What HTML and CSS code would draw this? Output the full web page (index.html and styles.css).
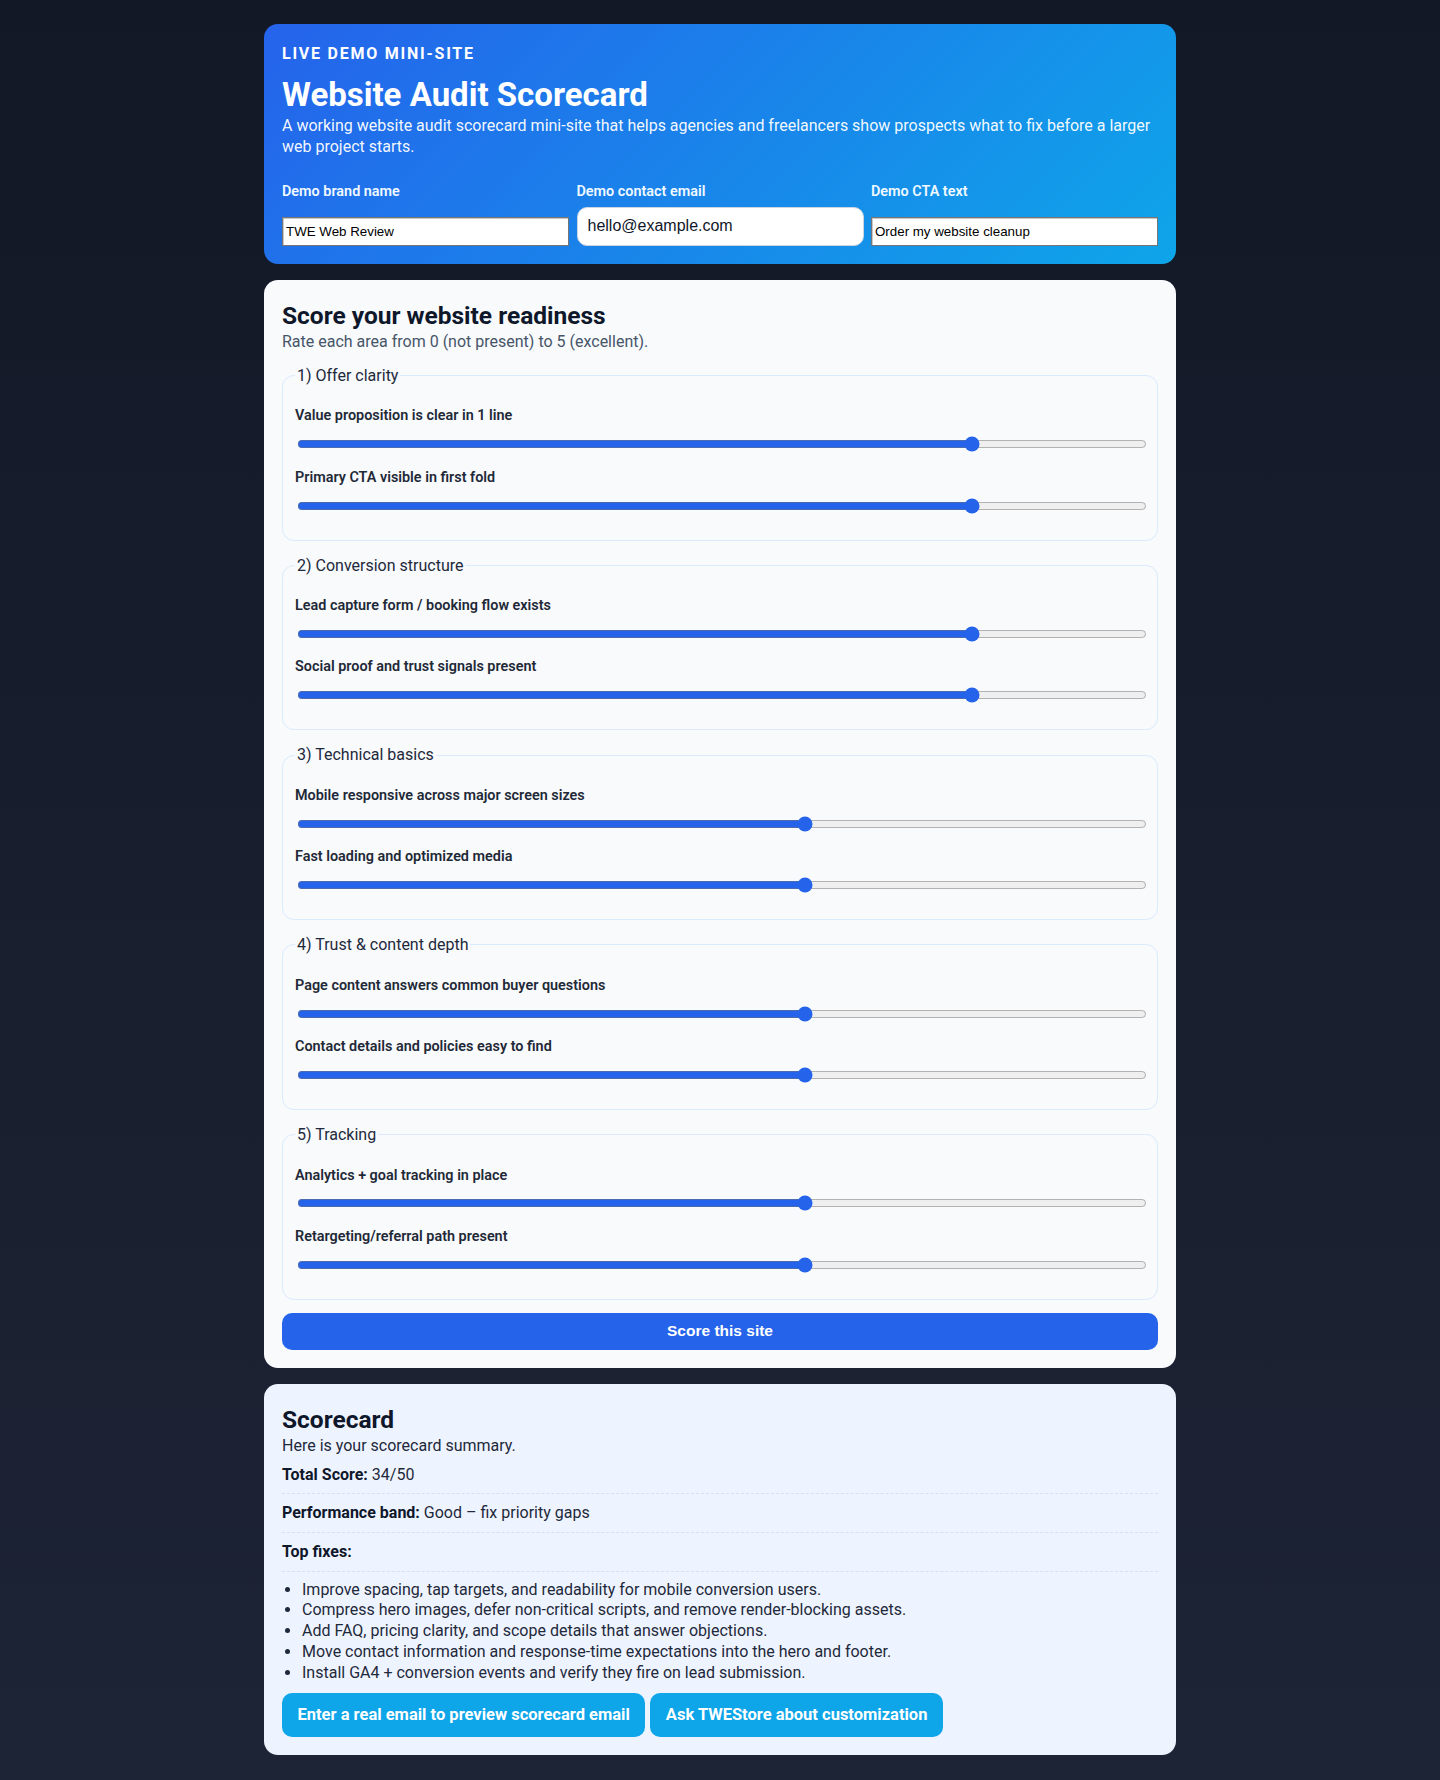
FILE: index.html
```html
<!DOCTYPE html>
<html lang="en">
<head>
<meta charset="utf-8">
<title>Website Audit Scorecard</title>
<link rel="stylesheet" href="styles.css">
</head>
<body>
<main class="page">
  <section class="hero">
    <p class="eyebrow">LIVE DEMO MINI-SITE</p>
    <h1 class="hero-title">Website Audit Scorecard</h1>
    <p class="hero-sub">A working website audit scorecard mini-site that helps agencies and freelancers show prospects what to fix before a larger web project starts.</p>
    <div class="brand-grid">
      <label class="brand-field">
        <span class="brand-label">Demo brand name</span>
        <input class="plain-input" type="text" value="TWE Web Review">
      </label>
      <label class="brand-field">
        <span class="brand-label">Demo contact email</span>
        <input class="email-input" type="email" value="hello@example.com">
      </label>
      <label class="brand-field">
        <span class="brand-label">Demo CTA text</span>
        <input class="plain-input" type="text" value="Order my website cleanup">
      </label>
    </div>
  </section>

  <section class="card card-form">
    <h2 class="card-title">Score your website readiness</h2>
    <p class="card-sub">Rate each area from 0 (not present) to 5 (excellent).</p>

    <fieldset class="group">
      <legend class="group-legend">1) Offer clarity</legend>
      <div class="group-rows">
        <div class="row"><label class="row-label">Value proposition is clear in 1 line</label><input class="range" type="range" min="0" max="5" step="1" value="4"></div>
        <div class="row"><label class="row-label">Primary CTA visible in first fold</label><input class="range" type="range" min="0" max="5" step="1" value="4"></div>
      </div>
    </fieldset>

    <fieldset class="group">
      <legend class="group-legend">2) Conversion structure</legend>
      <div class="group-rows">
        <div class="row"><label class="row-label">Lead capture form / booking flow exists</label><input class="range" type="range" min="0" max="5" step="1" value="4"></div>
        <div class="row"><label class="row-label">Social proof and trust signals present</label><input class="range" type="range" min="0" max="5" step="1" value="4"></div>
      </div>
    </fieldset>

    <fieldset class="group">
      <legend class="group-legend">3) Technical basics</legend>
      <div class="group-rows">
        <div class="row"><label class="row-label">Mobile responsive across major screen sizes</label><input class="range" type="range" min="0" max="5" step="1" value="3"></div>
        <div class="row"><label class="row-label">Fast loading and optimized media</label><input class="range" type="range" min="0" max="5" step="1" value="3"></div>
      </div>
    </fieldset>

    <fieldset class="group">
      <legend class="group-legend">4) Trust &amp; content depth</legend>
      <div class="group-rows">
        <div class="row"><label class="row-label">Page content answers common buyer questions</label><input class="range" type="range" min="0" max="5" step="1" value="3"></div>
        <div class="row"><label class="row-label">Contact details and policies easy to find</label><input class="range" type="range" min="0" max="5" step="1" value="3"></div>
      </div>
    </fieldset>

    <fieldset class="group">
      <legend class="group-legend">5) Tracking</legend>
      <div class="group-rows">
        <div class="row"><label class="row-label">Analytics + goal tracking in place</label><input class="range" type="range" min="0" max="5" step="1" value="3"></div>
        <div class="row"><label class="row-label">Retargeting/referral path present</label><input class="range" type="range" min="0" max="5" step="1" value="3"></div>
      </div>
    </fieldset>

    <button class="score-btn" type="button">Score this site</button>
  </section>

  <section class="card card-result">
    <h2 class="card-title">Scorecard</h2>
    <p class="card-sub dark">Here is your scorecard summary.</p>
    <div class="stat"><strong>Total Score:</strong> 34/50</div>
    <div class="stat"><strong>Performance band:</strong> Good – fix priority gaps</div>
    <div class="stat"><strong>Top fixes:</strong></div>
    <ul class="fixes">
      <li>Improve spacing, tap targets, and readability for mobile conversion users.</li>
      <li>Compress hero images, defer non-critical scripts, and remove render-blocking assets.</li>
      <li>Add FAQ, pricing clarity, and scope details that answer objections.</li>
      <li>Move contact information and response-time expectations into the hero and footer.</li>
      <li>Install GA4 + conversion events and verify they fire on lead submission.</li>
    </ul>
    <div class="actions">
      <a class="action-btn" href="#">Enter a real email to preview scorecard email</a>
      <a class="action-btn" href="#">Ask TWEStore about customization</a>
    </div>
  </section>
</main>
</body>
</html>
```
FILE: styles.css
```css
* { box-sizing: border-box; }

html, body { margin: 0; }

body {
  min-height: 1780px;
  padding: 24px 0;
  background: linear-gradient(180deg, #121826 0%, #1d2435 100%);
  font-family: Roboto, "Noto Sans", sans-serif;
  font-size: 16px;
  line-height: 1.35;
  color: #1e293b;
}

.page {
  width: 912px;
  margin: 0 auto;
  display: flex;
  flex-direction: column;
  gap: 16px;
}

/* Hero */
.hero {
  border-radius: 14px;
  padding: 18px;
  background: linear-gradient(135deg, #2563eb 0%, #0ea5e9 100%);
  color: #ffffff;
}

.eyebrow {
  margin: 0 0 10px;
  font-size: 16px;
  line-height: 23px;
  font-weight: 700;
  letter-spacing: 0.11em;
}

.hero-title {
  margin: 0;
  font-size: 33px;
  line-height: 1.2;
  font-weight: 700;
}

.hero-sub {
  margin: 0;
  font-size: 16px;
  line-height: 21.6px;
  color: rgba(255, 255, 255, 0.96);
}

.brand-grid {
  margin-top: 25px;
  display: grid;
  grid-template-columns: repeat(3, 1fr);
  gap: 7.5px;
}

.brand-field {
  display: flex;
  flex-direction: column;
  justify-content: space-between;
  gap: 5px;
}

.brand-label {
  font-size: 14.4px;
  line-height: 18.9px;
  font-weight: 600;
  color: #f0f9ff;
}

.plain-input {
  width: 100%;
  height: 29px;
  margin: 0;
  padding: 1px 3px;
  font-family: "Liberation Sans", Arial, sans-serif;
  font-size: 13.33px;
  color: #000;
  background: #fff;
  border: 1px solid #767676;
  border-radius: 0;
  box-shadow: inset 1px 1px 0 #c8c8c8;
}

.email-input {
  width: 100%;
  height: 39.5px;
  margin: 0;
  padding: 0 10px;
  font-family: "Liberation Sans", Arial, sans-serif;
  font-size: 16px;
  color: #0f172a;
  background: #fff;
  border: 1px solid #cbd5e1;
  border-radius: 10px;
}

/* Cards */
.card {
  border-radius: 14px;
  padding: 18px;
}

.card-form { background: #f8fafc; }
.card-result { background: #eef4ff; }

.card-title {
  margin: 0;
  padding-top: 2px;
  font-size: 24.5px;
  line-height: 31px;
  font-weight: 700;
  color: #0f172a;
}

.card-sub {
  margin: 0;
  font-size: 16px;
  line-height: 21.6px;
  color: #475569;
}

.card-sub.dark {
  margin-bottom: -1px;
  color: #1e293b;
}

/* Fieldsets */
.group {
  margin: 12px 0 0;
  padding: 21px 12px 24px;
  border: 1px solid #dbeafe;
  border-radius: 12px;
  min-width: 0;
}

.group + .group { margin-top: 14px; }

.group-legend {
  font-size: 16px;
  line-height: 21.6px;
  color: #1e293b;
}

.group-rows {
  display: flex;
  flex-direction: column;
  gap: 14.4px;
}

.row {
  display: flex;
  flex-direction: column;
  gap: 8px;
}

.row-label {
  font-size: 14.4px;
  line-height: 18.9px;
  font-weight: 600;
  color: #1f2937;
}

.range {
  width: 100%;
  height: 20px;
  margin: 0 2px;
  accent-color: #2563eb;
}

.score-btn {
  display: block;
  width: 100%;
  height: 37.4px;
  margin-top: 13px;
  border: 0;
  border-radius: 10px;
  background: #2563eb;
  color: #fff;
  font-family: "Liberation Sans", Arial, sans-serif;
  font-size: 15.5px;
  font-weight: 700;
  cursor: pointer;
}

/* Result */
.stat {
  padding: 8px 0;
  border-bottom: 1px dashed #d6e0f0;
  font-size: 16px;
  line-height: 21.6px;
  color: #1e293b;
}

.stat strong { color: #0f172a; font-weight: 700; }

.fixes {
  margin: 8px 0 9px;
  padding-left: 20px;
  line-height: 20.85px;
  color: #1e293b;
}

.actions {
  display: flex;
  gap: 5px;
}

.action-btn {
  display: inline-block;
  padding: 11.4px 15.5px;
  border-radius: 10px;
  background: #0ea5e9;
  color: #fff;
  font-size: 16.5px;
  line-height: 21.6px;
  font-weight: 700;
  text-decoration: none;
}
```
